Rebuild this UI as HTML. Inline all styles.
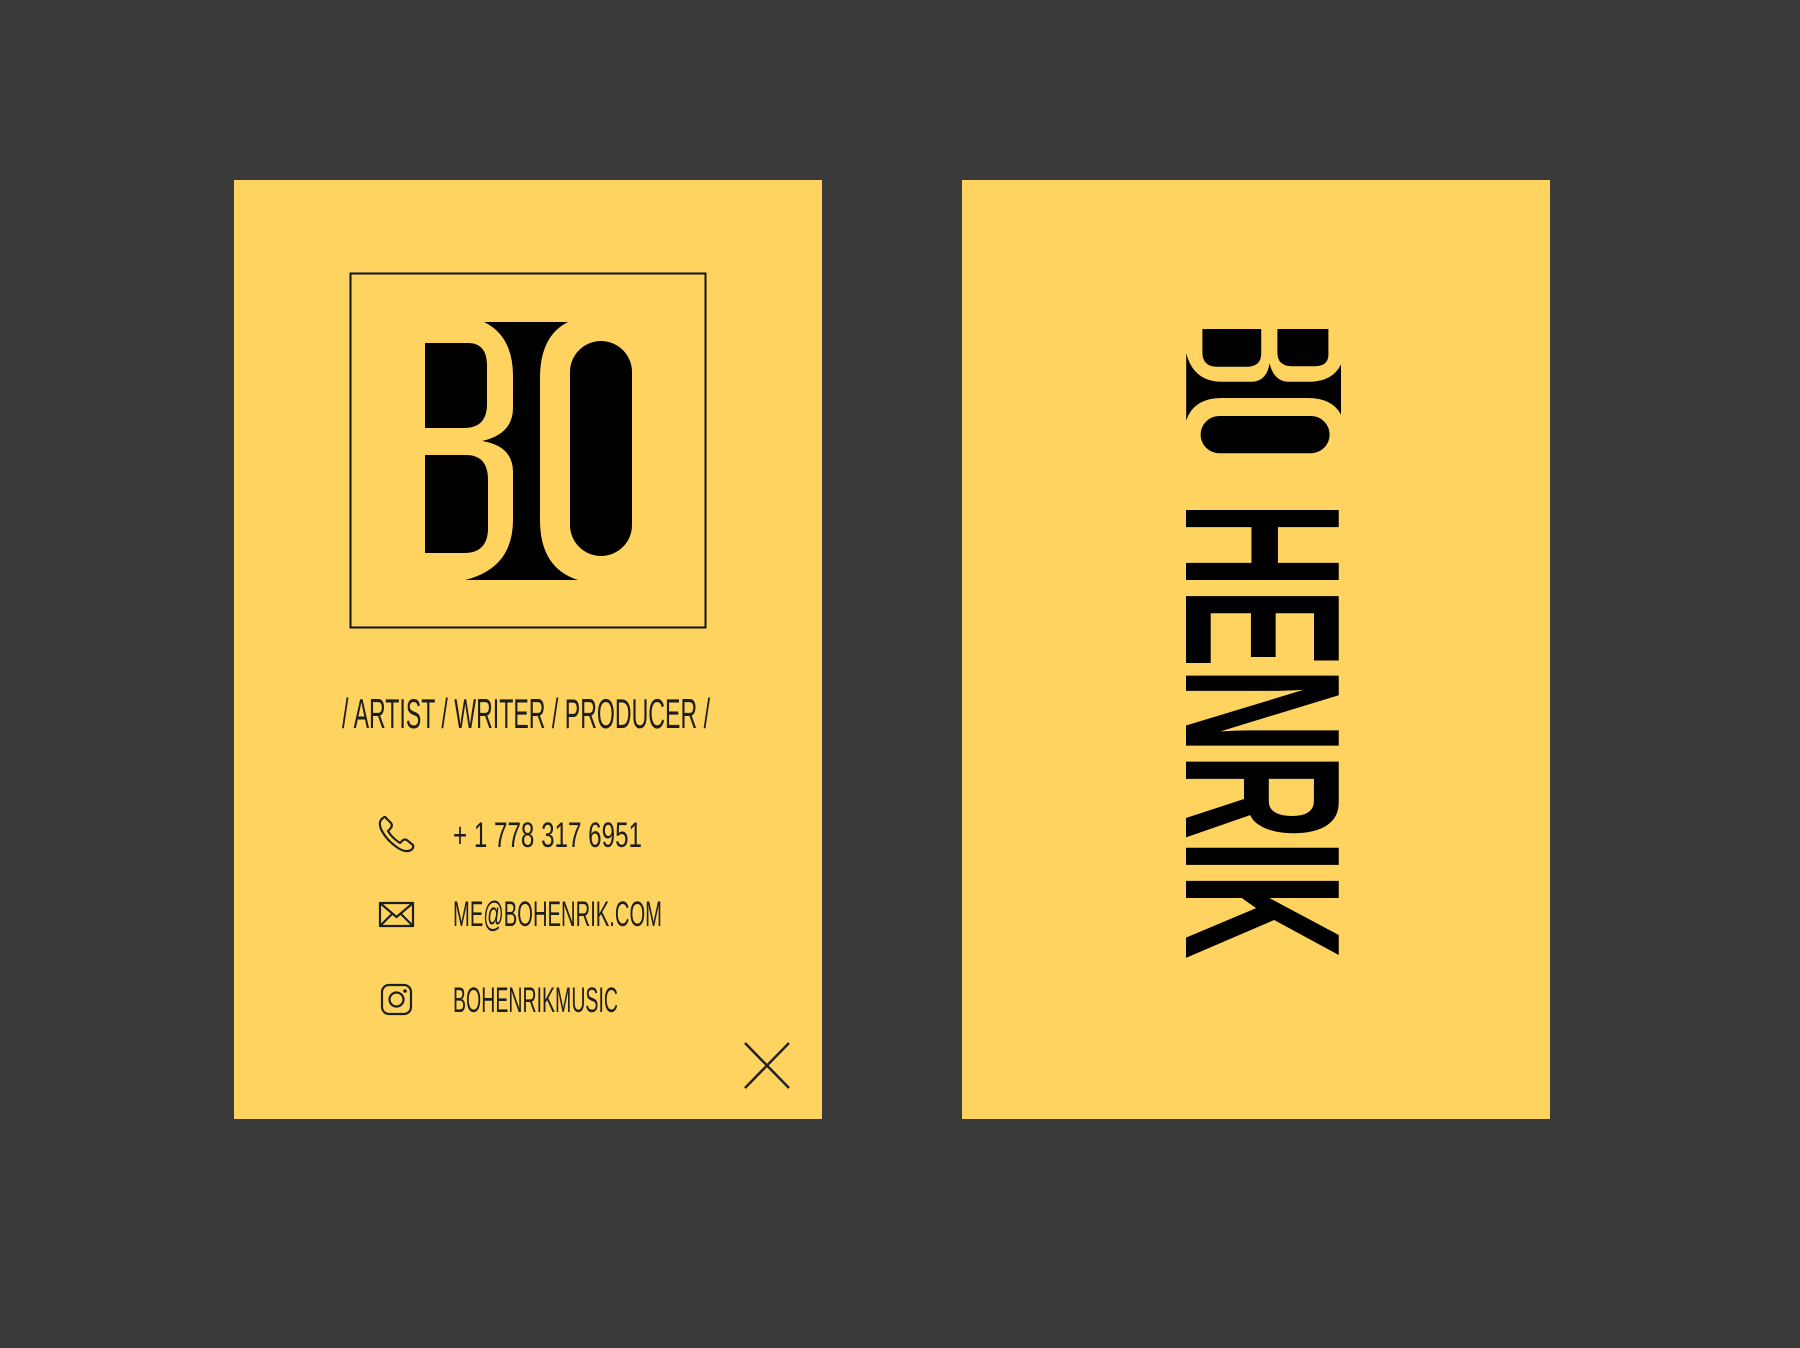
<!DOCTYPE html>
<html><head><meta charset="utf-8"><style>
html,body{margin:0;padding:0;background:#3a3a3a;}
svg{display:block;}
</style></head><body>
<svg width="1800" height="1348" viewBox="0 0 1800 1348" xmlns="http://www.w3.org/2000/svg">
<defs>
<g id="logo">
<path d="M425,343 H468 Q487,343 487,366 V404 Q487,428 464,428 H425 Z" fill="#000"/>
<path d="M425,455 H466 Q488,455 488,480 V528 Q488,553 464,553 H425 Z" fill="#000"/>
<path d="M484,322 H568 Q540,336 540,378 V520 Q540,568 578,580 H465 Q513,568 513,520 V472 Q513,446 482,441 Q513,434 513,408 V376 Q513,336 484,322 Z" fill="#000"/>
<rect x="570" y="341" width="62" height="215" rx="31" fill="#000"/>
</g>
</defs>
<rect width="1800" height="1348" fill="#3a3a3a"/>
<rect x="234" y="180" width="588" height="939" fill="#ffd35f"/>
<rect x="962" y="180" width="588" height="939" fill="#ffd35f"/>
<rect x="350.5" y="273.5" width="355" height="354" fill="none" stroke="#111" stroke-width="2"/>
<use href="#logo"/>
<g font-family="Liberation Sans, sans-serif" fill="#1e1e1e">
<text x="342" y="728" font-size="42" textLength="368" lengthAdjust="spacingAndGlyphs">/ ARTIST / WRITER / PRODUCER /</text>
<text x="453" y="847" font-size="35" textLength="189" lengthAdjust="spacingAndGlyphs">+ 1 778 317 6951</text>
<text x="453" y="926" font-size="35" textLength="209" lengthAdjust="spacingAndGlyphs">ME@BOHENRIK.COM</text>
<text x="453" y="1012" font-size="35" textLength="165" lengthAdjust="spacingAndGlyphs">BOHENRIKMUSIC</text>
</g>
<g fill="none" stroke="#1e1e1e" stroke-width="2.2" stroke-linejoin="round" stroke-linecap="round">
<path d="M386,818 L391,823 Q393,826 390,829 L388,831 Q392,838 400,843 L402,841 Q405,838 408,841 L413,845 Q414,848 411,850 Q406,853 398,848 Q386,840 381,829 Q378,821 383,818 Q385,816 386,818 Z"/>
<rect x="380" y="903" width="33" height="23"/>
<path d="M380,903 L396.5,917 L413,903 M380,926 L392,914 M413,926 L401,914"/>
<rect x="382" y="985" width="29" height="29" rx="7"/>
<circle cx="396.5" cy="999.5" r="7"/>
</g>
<circle cx="405" cy="991" r="1.8" fill="#1e1e1e"/>
<path d="M745,1043 L789,1088 M789,1043 L745,1088" stroke="#222" stroke-width="2.5"/>
<use href="#logo" transform="matrix(0,0.6,-0.6,0,1534.2,74)"/>
<g font-family="Liberation Sans, sans-serif" font-weight="bold" font-size="222" fill="#000">
<text transform="translate(1186,502) rotate(90)" x="0" y="0" textLength="457" lengthAdjust="spacingAndGlyphs">HENRIK</text>
</g>
</svg>
</body></html>
